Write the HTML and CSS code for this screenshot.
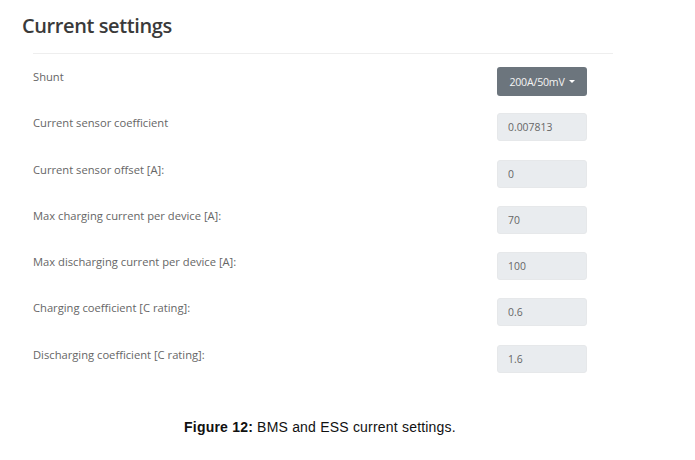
FILE: index.html
```html
<!DOCTYPE html>
<html lang="en">
<head>
    <meta charset="UTF-8">
    <meta name="viewport" content="width=device-width, initial-scale=1.0">
    <title>Current settings</title>
    <link rel="stylesheet" href="styles.css">
</head>
<body>
    <section class="panel">
        <header class="title">Current settings</header>
        <div class="settings">
            <div class="row">
                <label>Shunt</label>
                <button class="dropdown">200A/50mV <span class="caret"></span></button>
            </div>
            <div class="row">
                <label>Current sensor coefficient</label>
                <input class="field" type="text" value="0.007813" disabled>
            </div>
            <div class="row">
                <label>Current sensor offset [A]:</label>
                <input class="field" type="text" value="0" disabled>
            </div>
            <div class="row">
                <label>Max charging current per device [A]:</label>
                <input class="field" type="text" value="70" disabled>
            </div>
            <div class="row">
                <label>Max discharging current per device [A]:</label>
                <input class="field" type="text" value="100" disabled>
            </div>
            <div class="row">
                <label>Charging coefficient [C rating]:</label>
                <input class="field" type="text" value="0.6" disabled>
            </div>
            <div class="row">
                <label>Discharging coefficient [C rating]:</label>
                <input class="field" type="text" value="1.6" disabled>
            </div>
        </div>
    </section>
    <p class="caption"><b>Figure 12:</b> BMS and ESS current settings.</p>
</body>
</html>
```

FILE: styles.css
```css
* {
    margin: 0;
    padding: 0;
    box-sizing: border-box;
}
body {
    width: 695px;
    height: 460px;
    background: #fff;
    font-family: "Open Sans", "Noto Sans", sans-serif;
    color: #555;
}
.panel {
    padding: 12px 0 0 22px;
}
.title {
    font-size: 20px;
    font-weight: 600;
    line-height: 28px;
    color: #3a3a3a;
    letter-spacing: -0.4px;
    padding-bottom: 13px;
}
.settings {
    width: 580px;
    margin-left: 11px;
    border-top: 1px solid #eeeeee;
    padding-top: 13px;
}
.row {
    display: flex;
    justify-content: space-between;
    align-items: flex-start;
    height: 28px;
    margin-bottom: 18.3px;
    padding-right: 26px;
}
.row label {
    font-size: 11.2px;
    line-height: 20px;
    color: #666;
    letter-spacing: 0;
}
.field {
    width: 90px;
    height: 28px;
    border: 1px solid #e6e8ea;
    border-radius: 3px;
    background: #e9ecef;
    color: #666;
    font-family: inherit;
    font-size: 10.4px;
    padding-left: 10px;
    outline: none;
}
.dropdown {
    width: 90px;
    height: 29px;
    border: none;
    border-radius: 3px;
    background: #6c757d;
    color: #f4f4f4;
    font-family: inherit;
    font-size: 10.6px;
    letter-spacing: -0.2px;
    display: flex;
    align-items: center;
    justify-content: center;
    gap: 4px;
}
.caret {
    width: 0;
    height: 0;
    border-left: 3px solid transparent;
    border-right: 3px solid transparent;
    border-top: 3px solid #fff;
}
.caption {
    width: 640px;
    margin-top: 46px;
    text-align: center;
    font-family: "Liberation Sans", "Noto Sans", sans-serif;
    font-size: 14px;
    letter-spacing: 0.2px;
    color: #111;
}
.caption b {
    font-weight: 700;
}
```
